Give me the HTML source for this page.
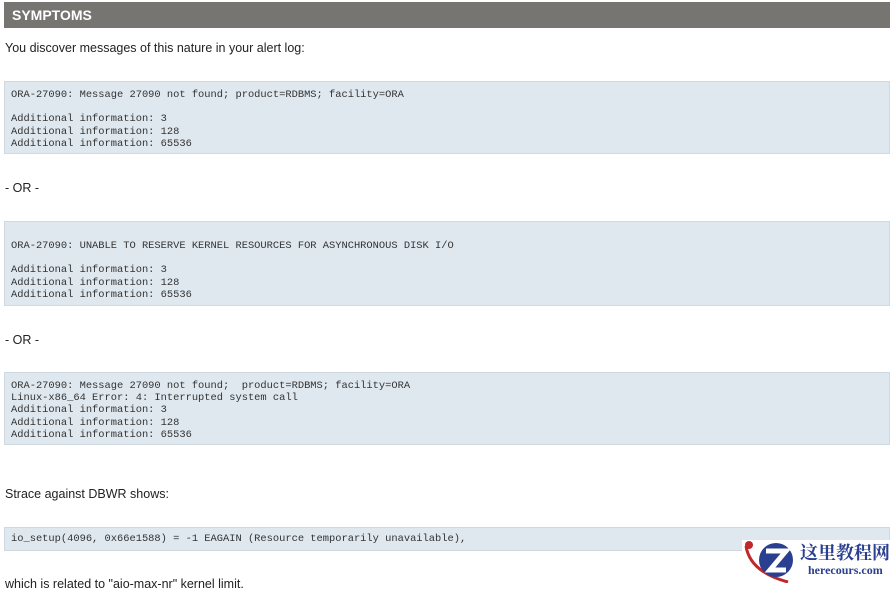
<!DOCTYPE html>
<html><head><meta charset="utf-8"><style>
body{margin:0;width:890px;height:583px;overflow:hidden;background:#fff;position:relative;font-family:"Liberation Sans",sans-serif;}
.hd{position:absolute;left:4px;top:2px;width:886px;height:26px;background:#767571;color:#fff;font-weight:bold;font-size:14px;line-height:26px;padding-left:8px;box-sizing:border-box;}
.t{position:absolute;left:5px;font-size:12.5px;color:#222;line-height:14px;}
.c{position:absolute;left:4px;width:886px;background:#dfe8ef;border:1px solid #cfd9e2;box-sizing:border-box;font-family:"Liberation Mono",monospace;font-size:10.4px;color:#333;line-height:12.2px;padding-left:6px;white-space:pre;}
</style></head><body>
<div class="hd">SYMPTOMS</div>
<div class="t" style="top:41px">You discover messages of this nature in your alert log:</div>
<div class="c" style="top:81px;height:73px;padding-top:7px">ORA-27090: Message 27090 not found; product=RDBMS; facility=ORA

Additional information: 3
Additional information: 128
Additional information: 65536</div>
<div class="t" style="top:181px">- OR -</div>
<div class="c" style="top:221px;height:85px;padding-top:18px">ORA-27090: UNABLE TO RESERVE KERNEL RESOURCES FOR ASYNCHRONOUS DISK I/O

Additional information: 3
Additional information: 128
Additional information: 65536</div>
<div class="t" style="top:333px">- OR -</div>
<div class="c" style="top:372px;height:73px;padding-top:7px">ORA-27090: Message 27090 not found;  product=RDBMS; facility=ORA
Linux-x86_64 Error: 4: Interrupted system call
Additional information: 3
Additional information: 128
Additional information: 65536</div>
<div class="t" style="top:487px">Strace against DBWR shows:</div>
<div class="c" style="top:527px;height:24px;padding-top:5px">io_setup(4096, 0x66e1588) = -1 EAGAIN (Resource temporarily unavailable),</div>
<div class="t" style="top:577px">which is related to "aio-max-nr" kernel limit.</div>
<div style="position:absolute;left:742px;top:540px;width:148px;height:43px;background:#fff;">
<svg width="60" height="43" style="position:absolute;left:0;top:0">
<path d="M4 6 Q8 32 46 42" stroke="#c0282a" stroke-width="3" fill="none"/>
<circle cx="7" cy="5" r="4" fill="#c0282a"/>
<circle cx="34" cy="20" r="17" fill="#2a3f8f"/>
<path d="M24 11 L44 11 L28 30 L44 30" stroke="#fff" stroke-width="5" fill="none"/>
</svg>
<div style="position:absolute;left:58px;top:1px;font-family:'Noto Serif CJK SC',serif;font-weight:bold;font-size:18px;color:#2a3f8f;line-height:22px">这里教程网</div>
<div style="position:absolute;left:66px;top:23px;font-family:'Liberation Serif',serif;font-weight:bold;font-size:12px;color:#2a3f8f">herecours.com</div>
</div>
</body></html>
